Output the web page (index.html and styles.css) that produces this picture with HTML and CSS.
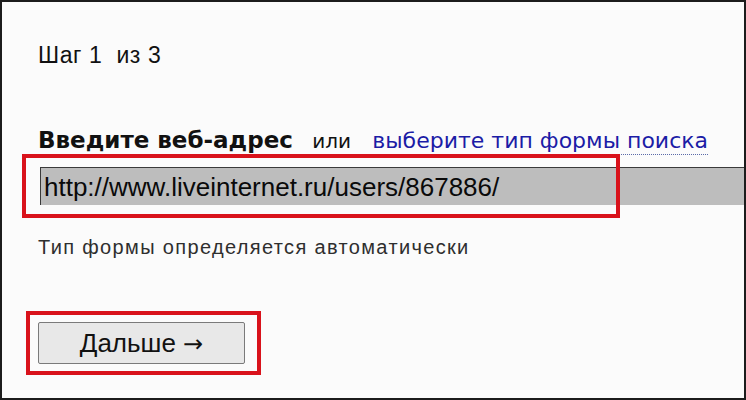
FILE: index.html
```html
<!DOCTYPE html>
<html lang="ru">
<head>
<meta charset="utf-8">
<title>Шаг 1 из 3</title>
<link rel="stylesheet" href="styles.css">
</head>
<body>
<div class="frame">
  <div class="step">Шаг 1&nbsp; из 3</div>
  <div class="heading">
    <span class="heading-main">Введите веб-адрес</span>
    <span class="heading-or">или</span>
    <a class="heading-link" href="#">выберите тип формы поиска</a>
  </div>
  <div class="field">
    <div class="url-input">http://www.liveinternet.ru/users/867886/</div>
    <span class="mark mark-field"></span>
  </div>
  <div class="hint">Тип формы определяется автоматически</div>
  <div class="button-mark">
    <button class="next-btn" type="button">Дальше <span class="arrow">→</span></button>
  </div>
</div>
</body>
</html>
```

FILE: styles.css
```css
html, body {
  margin: 0;
  padding: 0;
  background: #ffffff;
}

.frame {
  width: 746px;
  height: 400px;
  box-sizing: border-box;
  border: 2px solid #1c1c1c;
  background: #fbfbfb;
  padding: 39px 0 0 36px;
  overflow: hidden;
  font-family: "Liberation Sans", Arial, sans-serif;
  color: #111111;
}

.step {
  font-size: 23px;
  line-height: 28px;
  letter-spacing: 0.6px;
}

.heading {
  margin-top: 58px;
  font-size: 23px;
  line-height: 26px;
  white-space: nowrap;
  font-family: "DejaVu Sans", Verdana, sans-serif;
}

.heading-main {
  font-weight: bold;
}

.heading-or {
  margin-left: 12px;
  font-size: 20px;
}

.heading-link {
  margin-left: 14px;
  font-size: 22px;
  color: #1c1ca6;
  text-decoration: none;
  border-bottom: 1px dotted #5a6aa8;
  padding-bottom: 1px;
}

.field {
  position: relative;
  margin-top: 13px;
  margin-left: 2px;
}

.url-input {
  height: 38px;
  box-sizing: border-box;
  border-top: 1px solid #3a3a3a;
  border-left: 1px solid #3a3a3a;
  background: #bdbdbd;
  padding: 3px 0 0 3px;
  font-size: 26px;
  line-height: 32px;
  color: #0a0a0a;
  white-space: nowrap;
}

.mark {
  position: absolute;
  border: 4px solid #d9121b;
  box-sizing: border-box;
  pointer-events: none;
}

.mark-field {
  left: -18px;
  top: -13px;
  width: 598px;
  height: 64px;
}

.hint {
  margin-top: 30px;
  font-size: 20px;
  line-height: 24px;
  color: #2e2e2e;
  letter-spacing: 1.35px;
}

.button-mark {
  display: inline-block;
  margin-top: 52px;
  margin-left: -12px;
  border: 4px solid #d9121b;
  padding: 7px 12px 7px 8px;
}

.next-btn {
  display: block;
  width: 207px;
  height: 42px;
  box-sizing: border-box;
  border: 1px solid #7a7a7a;
  border-radius: 2px;
  background: #e8e8e8;
  font-family: "Liberation Sans", Arial, sans-serif;
  font-size: 26px;
  line-height: 38px;
  color: #111111;
  padding: 0;
  cursor: pointer;
}

.arrow {
  font-family: "DejaVu Sans", sans-serif;
  font-size: 24px;
}
```
